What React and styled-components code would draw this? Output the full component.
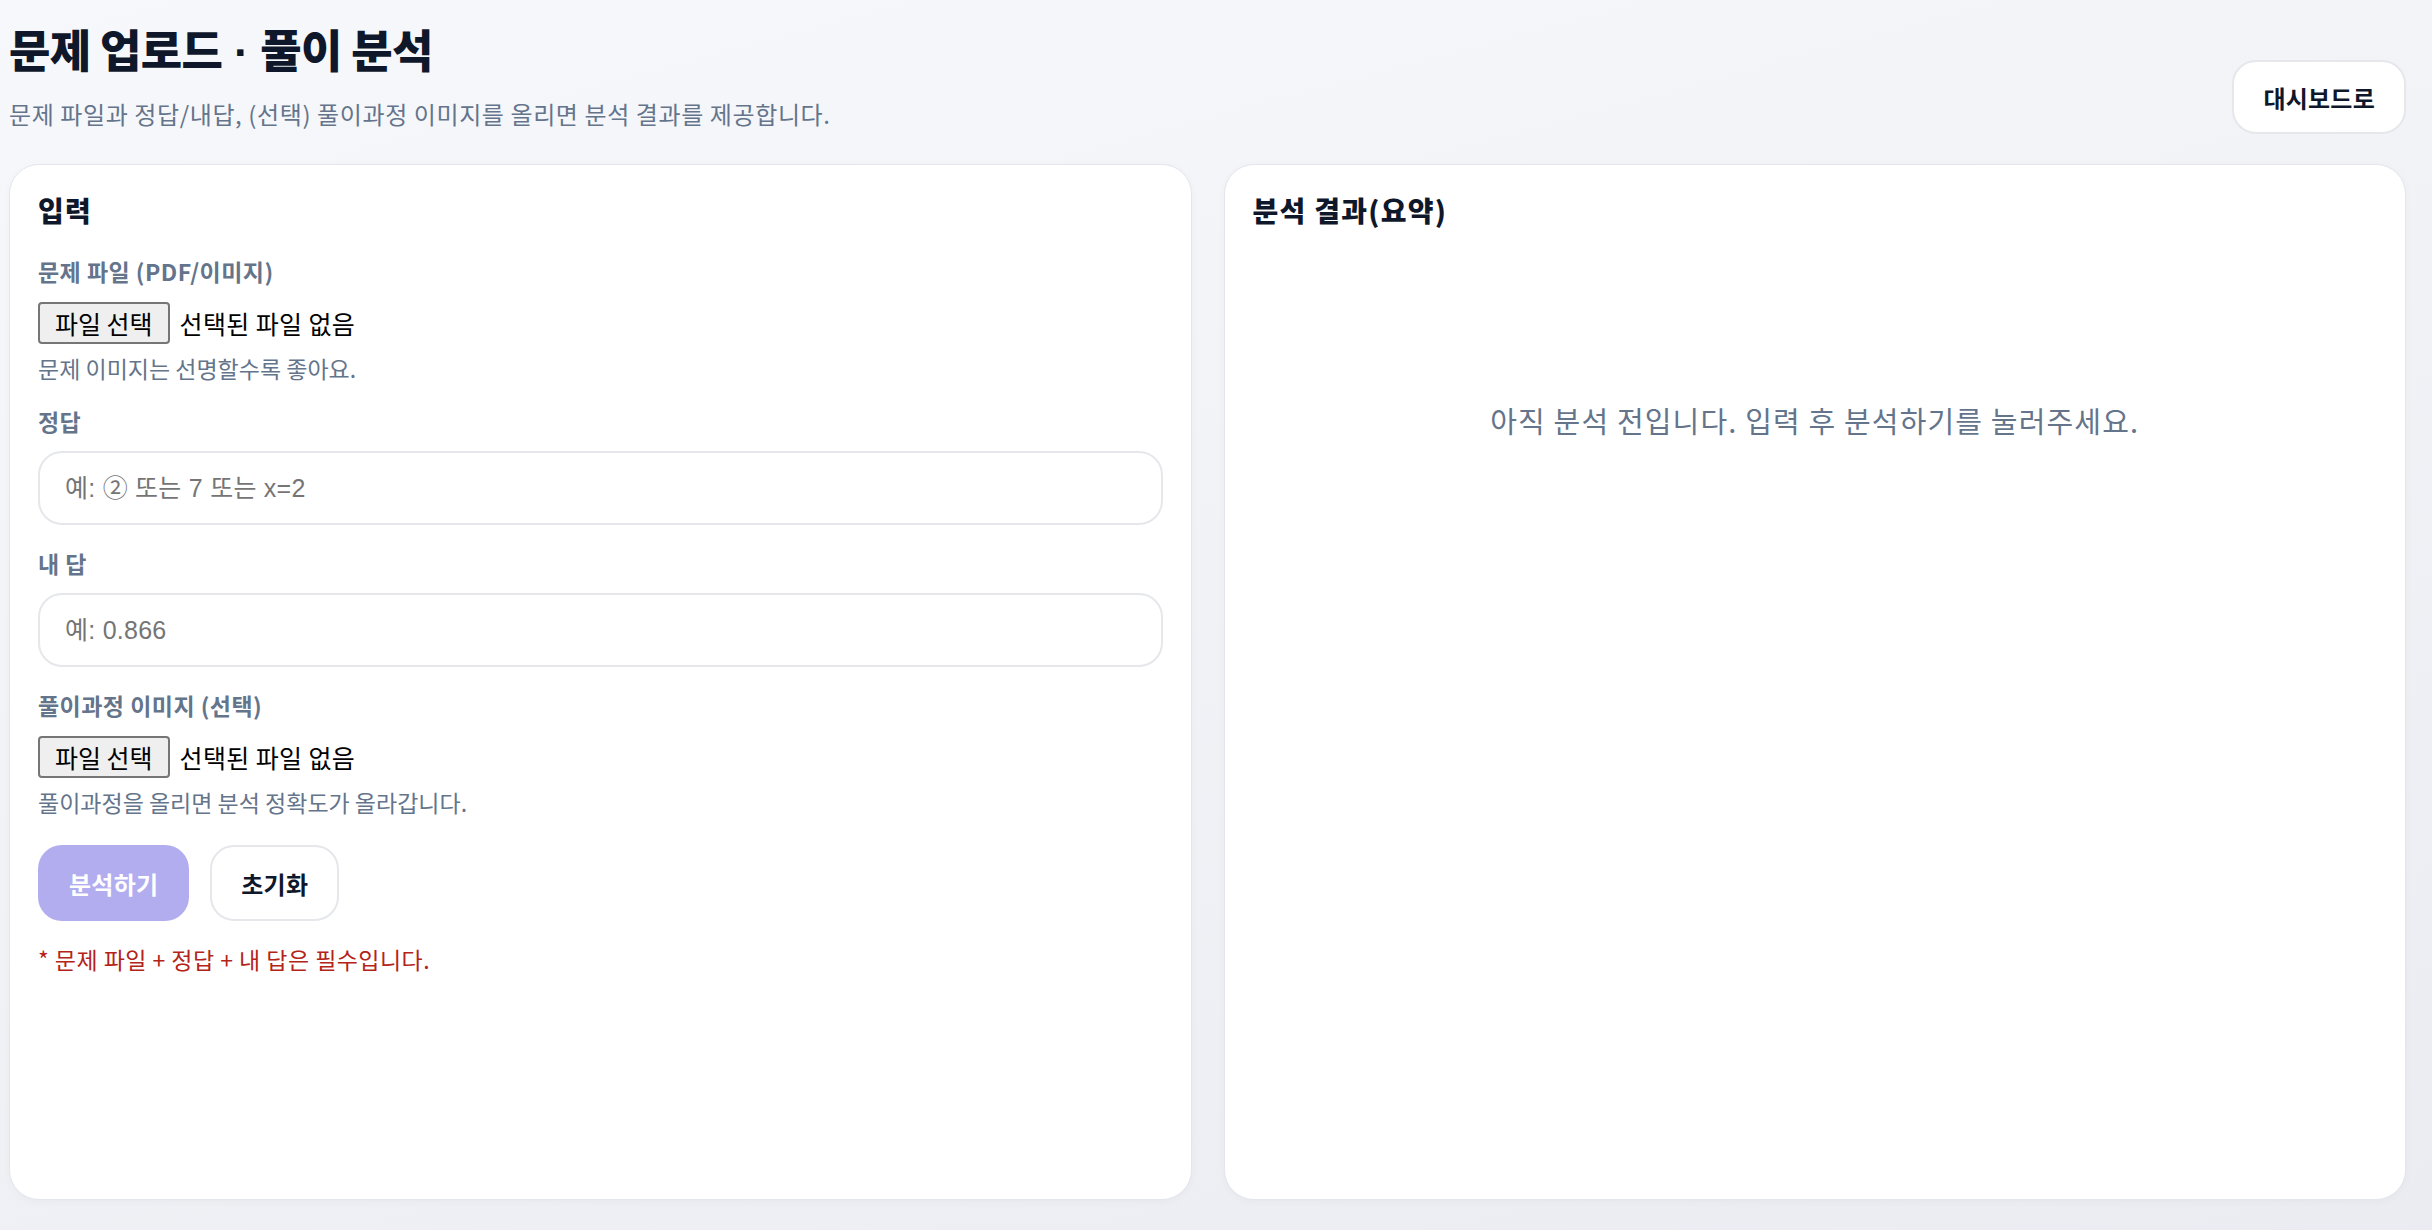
import React from "react";
import styled, { createGlobalStyle } from "styled-components";

const GlobalStyle = createGlobalStyle`
  html, body { margin: 0; padding: 0; }
  body {
    font-family: "Noto Sans CJK KR", "Noto Sans", "Liberation Sans", sans-serif;
    background: linear-gradient(165deg, #f7f8fb 0%, #f1f2f6 50%, #eaecf1 100%);
    min-height: 100vh;
  }
  * { box-sizing: border-box; }
`;

const Page = styled.div`
  min-height: 100vh;
  display: flex;
  flex-direction: column;
  padding: 22px 26px 30px 9px;
`;

const Header = styled.header`
  display: flex;
  justify-content: space-between;
  align-items: flex-end;
`;

const TitleBlock = styled.div`
  display: flex;
  flex-direction: column;
  padding-bottom: 3px;
`;

const Title = styled.h1`
  margin: 0;
  height: 54px;
  font-size: 45px;
  line-height: 54px;
  font-weight: 800;
  letter-spacing: -0.015em;
  color: #0f172a;
`;

const Dot = styled.span`
  font-family: "Liberation Sans", sans-serif;
  font-weight: 700;
  line-height: 0;
`;

const Subtitle = styled.p`
  margin: 21px 0 0;
  font-size: 24px;
  line-height: 34px;
  letter-spacing: 0.025em;
  color: #64748b;
`;

const GhostButton = styled.button`
  height: ${(p) => p.$h || 74}px;
  padding: 0 ${(p) => p.$px || 29}px;
  border: 2px solid #e5e7eb;
  border-radius: 24px;
  background: #ffffff;
  color: #0f172a;
  font-family: inherit;
  font-size: 24px;
  font-weight: 700;
  letter-spacing: 0.01em;
  cursor: pointer;
`;

const PrimaryButton = styled.button`
  height: 76px;
  padding: 0 31px;
  border: none;
  border-radius: 24px;
  background: #b1adef;
  color: #ffffff;
  font-family: inherit;
  font-size: 24px;
  font-weight: 700;
  letter-spacing: 0.01em;
  cursor: not-allowed;
`;

const Grid = styled.main`
  flex: 1;
  display: grid;
  grid-template-columns: 1fr 1fr;
  gap: 32px;
  margin-top: 30px;
`;

const Card = styled.section`
  background: #ffffff;
  border: 1px solid #e3e6ec;
  border-radius: 30px;
  padding: 26px 28px;
  box-shadow: 0 2px 8px rgba(15, 23, 42, 0.03);
  display: flex;
  flex-direction: column;
`;

const CardTitle = styled.h2`
  margin: 0;
  font-size: 28px;
  line-height: 38px;
  font-weight: 800;
  color: #0f172a;
  letter-spacing: 0.045em;
`;

const Form = styled.div`
  display: flex;
  flex-direction: column;
  gap: 23px;
  margin-top: 27px;
`;

const Field = styled.div`
  display: flex;
  flex-direction: column;
`;

const Label = styled.label`
  font-size: 23px;
  line-height: 30px;
  font-weight: 700;
  letter-spacing: 0.02em;
  color: #64748b;
  margin-bottom: ${(p) => (p.$file ? 16 : 15)}px;
`;

const FileRow = styled.div`
  display: flex;
  align-items: center;
  gap: 10px;
  height: 42px;
`;

const FileButton = styled.button`
  height: 42px;
  padding: 0 15px;
  background: #efefef;
  border: 2px solid #767676;
  border-radius: 4px;
  font-family: inherit;
  font-size: 25px;
  color: #000;
  line-height: 1;
`;

const FileName = styled.span`
  font-size: 25px;
  letter-spacing: 0.015em;
  color: #000;
`;

const Helper = styled.p`
  margin: 9px 0 0;
  font-size: 23px;
  line-height: 30px;
  color: #64748b;
`;

const TextInput = styled.input`
  height: 74px;
  width: 100%;
  padding: 0 25px;
  border: 2px solid #e5e7eb;
  border-radius: 24px;
  font-family: "Liberation Sans", "Noto Sans CJK KR", sans-serif;
  font-size: 25px;
  letter-spacing: 0.01em;
  color: #0f172a;
  outline: none;
  &::placeholder { color: #757575; }
`;

const Actions = styled.div`
  display: flex;
  gap: 21px;
  margin-top: 5px;
`;

const ErrorText = styled.p`
  margin: 0;
  font-size: 23px;
  line-height: 30px;
  letter-spacing: 0.02em;
  color: #b42318;
`;

const Empty = styled.p`
  margin: 171px 0 0;
  text-align: center;
  font-size: 29px;
  line-height: 40px;
  letter-spacing: 0.04em;
  color: #64748b;
`;

function FilePicker() {
  return (
    <FileRow>
      <FileButton type="button">파일 선택</FileButton>
      <FileName>선택된 파일 없음</FileName>
    </FileRow>
  );
}

export default function App() {
  return (
    <>
      <GlobalStyle />
      <Page>
        <Header>
          <TitleBlock>
            <Title>
              문제 업로드<Dot> · </Dot>풀이 분석
            </Title>
            <Subtitle>
              문제 파일과 정답/내답, (선택) 풀이과정 이미지를 올리면 분석 결과를 제공합니다.
            </Subtitle>
          </TitleBlock>
          <GhostButton type="button">대시보드로</GhostButton>
        </Header>
        <Grid>
          <Card>
            <CardTitle>입력</CardTitle>
            <Form>
              <Field>
                <Label $file>문제 파일 (PDF/이미지)</Label>
                <FilePicker />
                <Helper>문제 이미지는 선명할수록 좋아요.</Helper>
              </Field>
              <Field>
                <Label>정답</Label>
                <TextInput placeholder="예: ② 또는 7 또는 x=2" />
              </Field>
              <Field>
                <Label>내 답</Label>
                <TextInput placeholder="예: 0.866" />
              </Field>
              <Field>
                <Label $file>풀이과정 이미지 (선택)</Label>
                <FilePicker />
                <Helper>풀이과정을 올리면 분석 정확도가 올라갑니다.</Helper>
              </Field>
              <Actions>
                <PrimaryButton type="button" disabled>분석하기</PrimaryButton>
                <GhostButton type="button" $h={76} $px={29}>초기화</GhostButton>
              </Actions>
              <ErrorText>* 문제 파일 + 정답 + 내 답은 필수입니다.</ErrorText>
            </Form>
          </Card>
          <Card>
            <CardTitle>분석 결과(요약)</CardTitle>
            <Empty>아직 분석 전입니다. 입력 후 분석하기를 눌러주세요.</Empty>
          </Card>
        </Grid>
      </Page>
    </>
  );
}
